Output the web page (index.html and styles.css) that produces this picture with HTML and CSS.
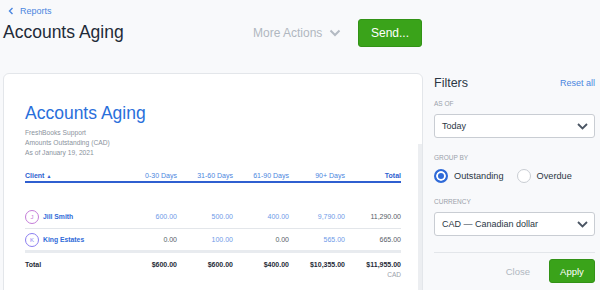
FILE: index.html
```html
<!DOCTYPE html>
<html>
<head>
<meta charset="utf-8">
<link rel="stylesheet" href="styles.css">
</head>
<body>
<header class="top">
  <a class="back"><svg width="6" height="8" viewBox="0 0 6 8"><path d="M4.5 1 L1.5 4 L4.5 7" fill="none" stroke="#4a86e0" stroke-width="1.4"/></svg>Reports</a>
  <div class="titlebar">
    <h1>Accounts Aging</h1>
    <div class="actions">
      <span class="more">More Actions <svg width="12" height="8" viewBox="0 0 12 8"><path d="M1.5 1.5 L6 6 L10.5 1.5" fill="none" stroke="#b4bac3" stroke-width="2"/></svg></span>
      <button class="send">Send...</button>
    </div>
  </div>
</header>
<main class="layout">
  <section class="card">
    <h2>Accounts Aging</h2>
    <div class="meta">
      <div>FreshBooks Support</div>
      <div>Amounts Outstanding (CAD)</div>
      <div>As of January 19, 2021</div>
    </div>
    <div class="table">
      <div class="row head">
        <div class="client">Client <span class="tri">&#9650;</span></div>
        <div>0-30 Days</div><div>31-60 Days</div><div>61-90 Days</div><div>90+ Days</div><div class="tot">Total</div>
      </div>
      <div class="row body">
        <div class="client"><span class="av av-j">J</span>Jill Smith</div>
        <div class="lk">600.00</div><div class="lk">500.00</div><div class="lk">400.00</div><div class="lk">9,790.00</div><div class="pl">11,290.00</div>
      </div>
      <div class="row body last">
        <div class="client"><span class="av av-k">K</span>King Estates</div>
        <div class="pl">0.00</div><div class="lk">100.00</div><div class="pl">0.00</div><div class="lk">565.00</div><div class="pl">665.00</div>
      </div>
      <div class="row total">
        <div class="client">Total</div>
        <div>$600.00</div><div>$600.00</div><div>$400.00</div><div>$10,355.00</div><div>$11,955.00<span class="cur">CAD</span></div>
      </div>
    </div>
  </section>
  <aside class="filters">
    <div class="fhead"><span class="ftitle">Filters</span><a class="reset">Reset all</a></div>
    <div class="label">AS OF</div>
    <div class="select">Today<svg width="11" height="7" viewBox="0 0 11 7"><path d="M1 1 L5.5 5.5 L10 1" fill="none" stroke="#4a5563" stroke-width="1.8"/></svg></div>
    <div class="label">GROUP BY</div>
    <div class="radios">
      <span class="radio on"></span><span class="rl">Outstanding</span>
      <span class="radio"></span><span class="rl">Overdue</span>
    </div>
    <div class="label">CURRENCY</div>
    <div class="select">CAD — Canadian dollar<svg width="11" height="7" viewBox="0 0 11 7"><path d="M1 1 L5.5 5.5 L10 1" fill="none" stroke="#4a5563" stroke-width="1.8"/></svg></div>
    <div class="foot"><span class="close">Close</span><button class="apply">Apply</button></div>
  </aside>
</main>
</body>
</html>
```
FILE: styles.css
```css
* { box-sizing: border-box; }
html, body { margin: 0; height: 100%; overflow: hidden; }
body { background: #f8f9fb; font-family: "Liberation Sans", Arial, sans-serif; color: #2b3744; }
.top { padding: 5px 0 0 0; }
.back { display: flex; align-items: center; gap: 6px; margin-left: 8px; font-size: 9px; color: #4a86e0; height: 12px; }
.titlebar { display: flex; align-items: center; height: 31px; }
h1 { margin: 0 0 0 3px; font-weight: 400; font-size: 17.5px; color: #1f2b38; width: 250px; }
.actions { display: flex; align-items: center; }
.more { font-size: 12px; color: #b0b7c0; display: flex; align-items: center; gap: 7px; width: 105px; }
.send { width: 64px; height: 28px; background: #3aa31a; color: #fff; border: 1px solid #329216; border-radius: 3px; font: 12px "Liberation Sans", Arial, sans-serif; padding: 0; }
.layout { display: flex; margin-top: 25px; }
.card { width: 420px; margin-left: 3px; height: 260px; border: 1px solid #e3e6ea; border-radius: 6px; padding: 27px 21px 0 21px;
  background: #fff linear-gradient(#eceef1, #eceef1) no-repeat right 0 top 70px / 4px 100%; }
h2 { margin: 0; font-weight: 400; font-size: 17.5px; color: #2a6fdb; line-height: 24px; }
.meta { margin-top: 3px; font-size: 6.7px; line-height: 10px; color: #8a929c; }
.table { margin-top: 14px; font-size: 7px; }
.row { display: grid; grid-template-columns: 96px repeat(5, 56px); align-items: center; }
.row > div { text-align: right; }
.row > .client { text-align: left; display: flex; align-items: center; }
.head { color: #4a86e0; border-bottom: 2px solid #2f5fd0; height: 11px; padding-bottom: 2px; }
.head .client { font-weight: 700; color: #2f5fd0; gap: 2px; }
.tri { font-size: 5px; }
.head .tot { font-weight: 700; color: #2f5fd0; }
.body { height: 24px; border-bottom: 1px solid #e3e6ea; }
.head + .body { margin-top: 22px; }
.body.last { border-bottom: 3px solid #e8ebef; }
.body .client { color: #2f6ad8; font-weight: 700; gap: 4px; font-size: 6.8px; }
.av { flex: none; width: 14px; height: 14px; border-radius: 50%; border: 1px solid #c47dd8; display: inline-flex; align-items: center; justify-content: center; font-size: 6px; font-weight: 400; color: #c47dd8; }
.av-k { border-color: #8b7ef0; color: #8b7ef0; }
.lk { color: #6d9ae8; }
.pl { color: #555e68; }
.total { font-weight: 700; color: #1f2b38; padding-top: 8px; align-items: start; }
.total > div:last-child { display: flex; flex-direction: column; align-items: flex-end; }
.cur { font-weight: 400; color: #9aa1aa; font-size: 6.5px; margin-top: 3px; }
.filters { flex: 1; padding: 1px 5px 0 11px; height: 260px; }
.fhead { display: flex; justify-content: space-between; align-items: center; height: 18px; }
.ftitle { font-size: 12.5px; color: #2b3744; }
.reset { font-size: 9px; color: #4a86e0; }
.label { font-size: 6.5px; color: #9aa1aa; margin-top: 8px; margin-bottom: 7px; }
.select { height: 24px; border: 1px solid #c9cdd3; border-radius: 3px; background: #fff; display: flex; align-items: center; justify-content: space-between; padding: 0 6px 0 7px; font-size: 9px; color: #2b3744; }
.select + .label { margin-top: 16px; }
.radios { display: flex; align-items: center; height: 16px; font-size: 9.2px; margin-top: 3px; }
.radio { flex: none; width: 14px; height: 14px; border-radius: 50%; border: 1px solid #c9cdd3; background: #fff; margin-right: 6px; }
.radio.on { border: 2px solid #2f6ad8; box-shadow: inset 0 0 0 2px #fff; background: #2f6ad8; }
.rl { margin-right: 13px; color: #2b3744; }
.radios + .label { margin-top: 14px; }
.foot { margin-top: 16px; border-top: 1px solid #e3e6ea; padding-top: 6px; display: flex; justify-content: flex-end; align-items: center; }
.close { font-size: 9.5px; color: #b0b7c0; margin-right: 19px; }
.apply { width: 46px; height: 24px; background: #3aa31a; border: 1px solid #329216; border-radius: 3px; color: #fff; font: 9.5px "Liberation Sans", Arial, sans-serif; padding: 0; }
```
